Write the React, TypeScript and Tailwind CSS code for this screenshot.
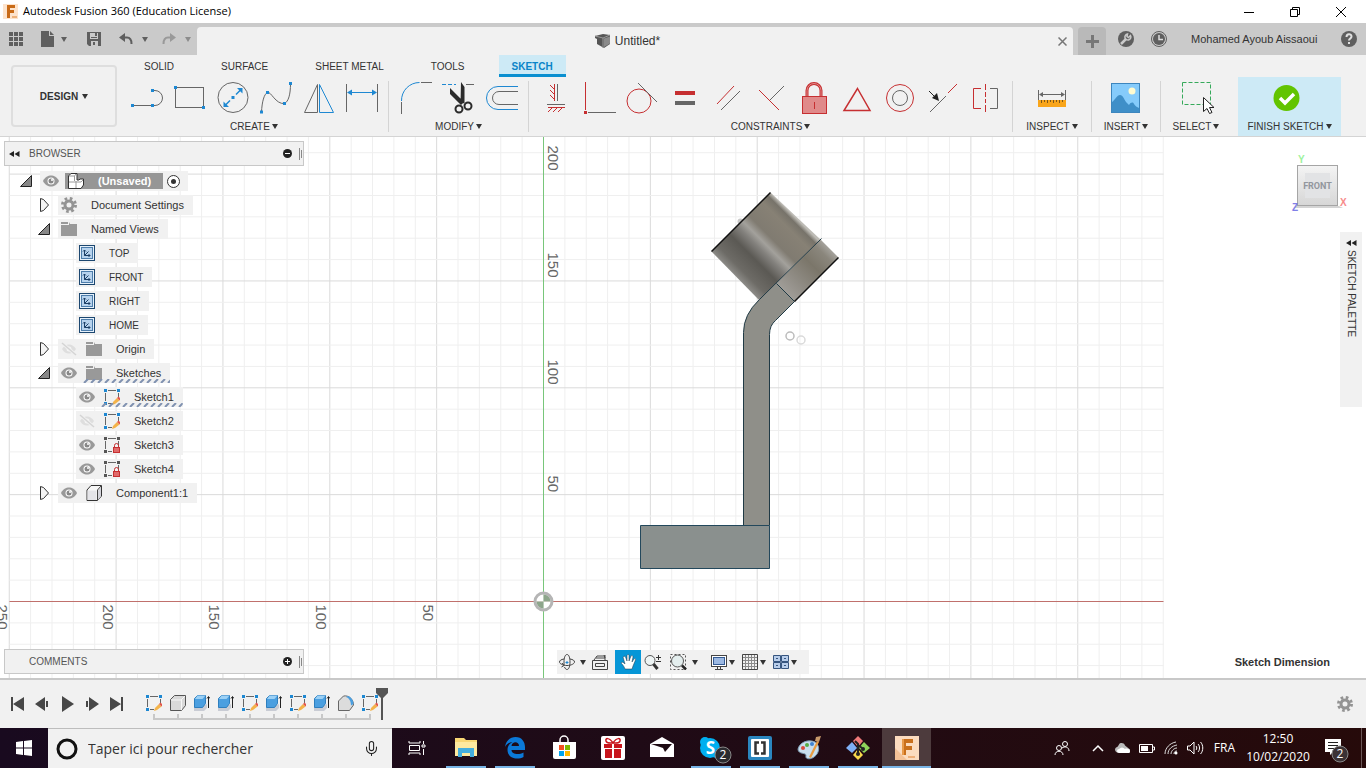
import type { ReactNode } from "react";
import { LuMic } from "react-icons/lu";

const GRAY = "#666666";
const RED = "#c62f31";
const BLUE = "#1e88d2";

function Svg({ w = 16, h = 16, children }: { w?: number; h?: number; children: ReactNode }) {
  return (
    <svg width={w} height={h} viewBox={`0 0 ${w} ${h}`} fill="none" className="shrink-0">
      {children}
    </svg>
  );
}

function Caret({ color = "#333333" }: { color?: string }) {
  return (
    <Svg w={6} h={5}>
      <path d="M0 0h6L3 5z" fill={color} />
    </Svg>
  );
}

function Dots({ points }: { points: [number, number][] }) {
  return (
    <>
      {points.map(([x, y]) => (
        <rect key={`${x}-${y}`} x={x - 1.5} y={y - 1.5} width="3" height="3" fill={BLUE} />
      ))}
    </>
  );
}

/* ---------- ribbon icons ---------- */

const createTools: [string, ReactNode][] = [
  ["Line", <><path d="M2 23.5h20M23 8.5h1a7.5 7.5 0 0 1 0 15h-2" stroke={GRAY} /><Dots points={[[1.5, 23.5], [21.5, 23.5], [21.5, 8.5]]} /></>],
  ["Rectangle", <><rect x="1.5" y="5.5" width="28" height="20" stroke={GRAY} /><Dots points={[[1.5, 5.5], [29.5, 25.5]]} /></>],
  ["Circle", <><circle cx="16" cy="15.5" r="15" stroke={GRAY} /><path d="M8 23.5l5-5M19 12.5l5-5" stroke={BLUE} strokeWidth="1.5" /><path d="M6.5 25v-5.5L12 25zM25.5 6v5.5L20 6z" fill={BLUE} /><Dots points={[[16, 15.5]]} /></>],
  ["Spline", <><path d="M1.5 30C2 20 4 12 7.500 10.500s8 12 17 11c4-2 6-9 6-20" stroke={GRAY} /><Dots points={[[1.5, 30], [7.5, 10.5], [24.5, 21.5], [30.5, 1.5]]} /></>],
  ["Mirror", <><path d="M14.5 2.500v28h-13z" stroke={GRAY} /><path d="M16.5 2.500v28h14z" stroke={BLUE} /></>],
  ["Dimension", <><path d="M.5 2v28M31.5 2v28" stroke={GRAY} /><path d="M2 10.5h28" stroke={BLUE} /><path d="M1 10.5l5-3v6zM31 10.5l-5-3v6z" fill={BLUE} /></>],
];

const modifyTools: [string, ReactNode][] = [
  ["Fillet", <><path d="M1.5 19A18 18 0 0 1 19.5 .5" stroke={BLUE} /><path d="M21 .5h11M1.5 20v12" stroke={GRAY} /></>],
  ["Trim", <><path d="M-1 2.5h14" stroke={BLUE} strokeDasharray="4 2" /><path d="M23 2.5h8" stroke={GRAY} /><path d="M7 6l14 14-3 3L7 12zM18 0l3.500 5v16l-4 1z" fill="#2b2b2b" /><circle cx="16" cy="27" r="3.5" stroke="#2b2b2b" strokeWidth="2" /><circle cx="25" cy="24" r="3.5" stroke="#2b2b2b" strokeWidth="2" /></>],
  ["Offset", <><path d="M32 4.500H12a11.500 11.500 0 0 0 0 23h20" stroke={BLUE} /><path d="M32 9.500H13a6.500 6.500 0 0 0 0 13h19" stroke={GRAY} /></>],
];

const constraintTools: [string, ReactNode][] = [
  ["Horizontal/Vertical", <><path d="M14.5 2v17M8 25.5h17M10 3l4 4M10 8l4 4M10 13l4 4M12 26l-4 4M17 26l-4 4M22 26l-4 4" stroke={RED} /><path d="M17.5 2v17M7 22.5h18" stroke={GRAY} /></>],
  ["Coincident", <><path d="M2.5 0v28" stroke={RED} /><rect x="1" y="29" width="3" height="3" fill={RED} /><path d="M5 30.5h28" stroke={GRAY} /></>],
  ["Tangent", <><circle cx="13" cy="19" r="12" stroke={RED} /><path d="M12 1l19 19" stroke={GRAY} /></>],
  ["Equal", <><path d="M6 11h20" stroke={RED} strokeWidth="4" /><path d="M6 21h20" stroke={GRAY} strokeWidth="4" /></>],
  ["Parallel", <><path d="M5 22L22 4" stroke={RED} /><path d="M9 28L28 9" stroke={GRAY} /></>],
  ["Perpendicular", <><path d="M4 8l20 20" stroke={RED} /><path d="M15 18L29 4" stroke={GRAY} /></>],
  ["Fix", <><path d="M9 15V8.5a7 7 0 0 1 14 0V15" stroke={RED} strokeWidth="3" /><path d="M9 15V8.5a7 7 0 0 1 14 0V15" stroke="#e08a8a" /><rect x="4.5" y="14.5" width="24" height="17" fill="#e08a8a" stroke={RED} /><path d="M16.5 20v7" stroke={RED} /></>],
  ["Midpoint", <path d="M16.5 6.5l12.500 22H3z" stroke={RED} strokeWidth="1.5" />],
  ["Concentric", <><circle cx="16" cy="16" r="13.5" stroke={RED} /><circle cx="16" cy="16" r="7.5" stroke={GRAY} /></>],
  ["Collinear", <><path d="M3 30l16-16" stroke={GRAY} /><path d="M21 11L30 2" stroke={RED} /><path d="M2 9l6 6" stroke="#222" /><path d="M12 19l-2-8-5 5z" fill="#222" /></>],
  ["Symmetry", <><path d="M11 6.5H3.500v20H11M15.500 2v6M15.500 10v5M15.500 17v4M15.500 23v7" stroke={RED} /><path d="M20 6.5h7.500v20H20" stroke={GRAY} /></>],
];

const inspectIcon = (
  <>
    <path d="M2.5 8v10M29.5 8v10M4 12.5h24" stroke={GRAY} />
    <path d="M3 12.5l4-2.500v5zM29 12.5l-4-2.500v5z" fill={GRAY} />
    <rect x="2" y="18" width="28" height="7" fill="#f9a51a" />
    <path d="M5.5 18v3M8.5 18v2M11.5 18v3M14.5 18v2M17.5 18v3M20.5 18v2M23.5 18v3M26.5 18v2" stroke="#7a5518" />
  </>
);

const insertIcon = (
  <>
    <rect x="1.5" y="1.5" width="28" height="29" fill="#85cbfb" stroke="#3d86be" />
    <circle cx="22" cy="9" r="3.5" fill="#fffbd0" />
    <path d="M2 20c3-2 5-7 8-7s4 4 6 7l3 3c2-3 4-3 5-1s3 3 5 4v4H2z" fill="#3f8fc8" />
  </>
);

const selectIcon = (
  <>
    <rect x="2.5" y=".5" width="28" height="22" stroke="#36a95a" strokeDasharray="4 2" />
    <path d="M23.5 15.500v14l3.500-3 2.500 5 2.500-1-2.500-5h4.500z" fill="#fff" stroke="#222" />
  </>
);

const finishIcon = (
  <>
    <circle cx="12.5" cy="16" r="13" fill="#62c400" />
    <path d="M6 16l5 5 9-9" stroke="#fff" strokeWidth="3.5" />
  </>
);

function ToolGroup({ label, tools }: { label: string; tools: [string, ReactNode][] }) {
  return (
    <div className="flex flex-col px-[5px] pt-1">
      <div className="flex">
        {tools.map(([name, icon]) => (
          <button key={name} aria-label={name} className="flex h-[34px] w-[43px] items-center justify-center">
            <svg width="32" height="32" viewBox="0 0 32 32" fill="none" className="overflow-visible">
              {icon}
            </svg>
          </button>
        ))}
      </div>
      <GroupLabel label={label} />
    </div>
  );
}

function GroupLabel({ label }: { label: string }) {
  return (
    <button className="mt-[3px] flex h-4 items-center justify-center gap-0.5 text-[10px] whitespace-nowrap">
      {label}
      <Caret />
    </button>
  );
}

function SingleGroup({ label, icon, className }: { label: string; icon: ReactNode; className: string }) {
  return (
    <div className={`flex flex-col items-center pt-1 ${className}`}>
      <button aria-label={`${label} tool`} className="flex h-[34px] items-center">
        <svg width="32" height="32" viewBox="0 0 32 32" fill="none" className="overflow-visible">
          {icon}
        </svg>
      </button>
      <GroupLabel label={label} />
    </div>
  );
}

function Separator() {
  return <div className="h-[51px] w-px shrink-0 self-center bg-[#d4d4d4]" />;
}

/* ---------- browser tree ---------- */

function Eye() {
  return (
    <Svg>
      <path d="M0 8c2-4 5-5.500 8-5.500S14 4 16 8c-2 4-5 5.500-8 5.500S2 12 0 8z" fill="#999" />
      <circle cx="8" cy="8" r="3.5" fill="#fff" />
      <circle cx="8" cy="8" r="2.5" fill="#888" />
      <circle cx="9" cy="7" r="1" fill="#fff" />
    </Svg>
  );
}

function EyeOff() {
  return (
    <Svg>
      <path d="M1 8c2-3 4-4.500 7-4.500S13 5 15 8c-2 3-4 4.500-7 4.500S3 11 1 8z" fill="#dedede" />
      <circle cx="8" cy="8" r="2.5" fill="#f4f4f4" />
      <path d="M1 2l14 12" stroke="#f1f1f1" strokeWidth="3" />
      <path d="M1 2l14 12" stroke="#d4d4d4" strokeWidth="1.5" />
    </Svg>
  );
}

function Folder() {
  return (
    <Svg>
      <path d="M0 1h7v2H0zM8 1l1 2h7v12H0V4h8z" fill="#999" />
    </Svg>
  );
}

function Gear() {
  return (
    <Svg>
      <circle cx="8" cy="8" r="4" stroke="#949494" strokeWidth="3" />
      <circle cx="8" cy="8" r="6.5" stroke="#949494" strokeWidth="3" strokeDasharray="2.6 2.505" />
    </Svg>
  );
}

function ViewIcon() {
  return (
    <Svg>
      <rect x=".5" y=".5" width="15" height="15" fill="#e6f1fb" stroke="#1c4770" />
      <rect x="2.5" y="2.5" width="11" height="11" fill="#b7d3ee" stroke="#4d7dab" />
      <path d="M5.5 5v5.500H11M5.500 10.500L9.500 6.500M4 6.500L5.500 5 7 6.500M9.500 9l1.500 1.500L9.500 12" stroke="#1c3f66" />
    </Svg>
  );
}

function SketchIcon({ locked = false }: { locked?: boolean }) {
  const dot = locked ? "#555" : BLUE;
  return (
    <Svg>
      <path d="M4 1.5h8M1.500 4v8M14.500 4v5M4 14.500h4" stroke="#666" />
      <path d="M0 0h3v3H0zM13 0h3v3h-3zM0 13h3v3H0z" fill={dot} />
      {locked ? (
        <>
          <path d="M10.5 10V8.500a2 2 0 0 1 4 0V10" stroke={RED} />
          <rect x="9.5" y="10.5" width="6" height="5" fill="#e06a6a" stroke={RED} />
        </>
      ) : (
        <>
          <path d="M9 13l4-4 2.500 2.500-4.500 3.500-3 1z" fill="#f4b34a" />
          <path d="M13 9l1.500-1.500L17 10l-1.500 1.500z" fill="#e2574c" />
        </>
      )}
    </Svg>
  );
}

function BoxIcon() {
  return (
    <Svg>
      <path d="M1 5l4-4.500h10.500V11l-4 4.500H1z" fill="#f7f7f7" stroke="#333" />
      <path d="M12 5.500V15l3-4V2z" fill="#d5d5dc" />
      <path d="M1.500 5.500h9v9.500h-9z" fill="#e4e4e8" />
      <path d="M11.500 5v10M15 1l-3.500 4" stroke="#444" />
    </Svg>
  );
}

function AssemblyIcon() {
  return (
    <Svg>
      <path d="M.5 3L3 .5h6V7h2l1-1h3.500v6L13 15.500H.5z" fill="#fff" stroke="#333" />
      <path d="M1 9h7M8 8v7M6.500 3v5M1 3h5.500L8 1M8 9h5l2-2" stroke="#9a9a9a" />
    </Svg>
  );
}

function Expander({ open }: { open?: boolean }) {
  return open ? (
    <Svg w={12} h={12}>
      <path d="M11.5 .5v11H.5z" fill="#888" stroke="#222" />
    </Svg>
  ) : (
    <Svg w={12} h={14}>
      <path d="M2.5 .5v13l3-1 5-5.500-5-5.500z" fill="#f4f4f4" stroke="#333" />
    </Svg>
  );
}

type TreeRow = {
  label: string;
  level: 1 | 2;
  icon: ReactNode;
  eye?: "on" | "off";
  open?: boolean;
  hatched?: boolean;
};

const treeRows: TreeRow[] = [
  { label: "Document Settings", level: 1, icon: <Gear />, open: false },
  { label: "Named Views", level: 1, icon: <Folder />, open: true },
  { label: "TOP", level: 2, icon: <ViewIcon /> },
  { label: "FRONT", level: 2, icon: <ViewIcon /> },
  { label: "RIGHT", level: 2, icon: <ViewIcon /> },
  { label: "HOME", level: 2, icon: <ViewIcon /> },
  { label: "Origin", level: 1, icon: <Folder />, eye: "off", open: false },
  { label: "Sketches", level: 1, icon: <Folder />, eye: "on", open: true, hatched: true },
  { label: "Sketch1", level: 2, icon: <SketchIcon />, eye: "on", hatched: true },
  { label: "Sketch2", level: 2, icon: <SketchIcon />, eye: "off" },
  { label: "Sketch3", level: 2, icon: <SketchIcon locked />, eye: "on" },
  { label: "Sketch4", level: 2, icon: <SketchIcon locked />, eye: "on" },
  { label: "Component1:1", level: 1, icon: <BoxIcon />, eye: "on", open: false },
];

function TreeItem({ row }: { row: TreeRow }) {
  const isView = row.level === 2 && !row.eye;
  return (
    <li className={`flex h-6 items-center ${row.level === 1 ? "pl-[38px]" : "pl-[76px]"}`}>
      {row.open !== undefined && (
        <button aria-label={`Toggle ${row.label}`} className="mr-2 flex w-3 justify-center">
          <Expander open={row.open} />
        </button>
      )}
      <div className="relative flex h-5 items-center bg-[#f1f1f1] pr-[9px] pl-[3px]">
        {row.eye && (
          <button aria-label={`Visibility of ${row.label}`} className="mr-[9px]">
            {row.eye === "on" ? <Eye /> : <EyeOff />}
          </button>
        )}
        {row.icon}
        <span className={`ml-[14px] ${isView ? "text-[10px]" : ""}`}>{row.label}</span>
        {row.hatched && (
          <svg className="absolute right-0 bottom-0 left-[25px] h-1 w-[calc(100%-25px)]">
            <defs>
              <pattern id="hatch" width="7" height="4" patternUnits="userSpaceOnUse">
                <path d="M1 4l4-4" stroke="#8091b0" strokeWidth="2" />
              </pattern>
            </defs>
            <rect width="100%" height="4" fill="url(#hatch)" />
          </svg>
        )}
      </div>
    </li>
  );
}

function Grip() {
  return (
    <Svg w={3} h={12}>
      <path d="M.5 0v12M2.5 2v8" stroke="#888" />
    </Svg>
  );
}

function Browser() {
  return (
    <aside className="flex w-[304px] flex-col pt-1 pl-1 text-[11px] text-[#333]">
      <div className="flex h-[25px] shrink-0 items-center border border-[#c8c8c8] bg-[#f1f1f1] pr-px pl-1 text-[10px] text-[#555]">
        <button aria-label="Collapse browser">
          <Svg w={11} h={6}>
            <path d="M5 0v6L0 3zM10.5 0v6l-5-3z" fill="#222" />
          </Svg>
        </button>
        <h2 className="ml-[9px] flex-1">BROWSER</h2>
        <button aria-label="Hide browser" className="mr-[7px]">
          <Svg w={9} h={9}>
            <circle cx="4.5" cy="4.5" r="4.5" fill="#222" />
            <path d="M2 4.5h5" stroke="#fff" />
          </Svg>
        </button>
        <Grip />
      </div>
      <ul className="-ml-1 pt-[3px]">
        <li className="flex h-6 items-center pl-5">
          <button aria-label="Toggle document" className="mr-2">
            <Expander open />
          </button>
          <div className="flex h-5 items-center bg-[#f1f1f1] pr-2 pl-[3px]">
            <button aria-label="Visibility of document" className="mr-[6px]">
              <Eye />
            </button>
            <div className="flex h-4 items-center bg-[#969696] pr-3 pl-[3px] font-bold text-white">
              <AssemblyIcon />
              <span className="ml-[14px]">(Unsaved)</span>
            </div>
            <button aria-label="Activate component" className="ml-1">
              <Svg w={13} h={13}>
                <circle cx="6.5" cy="6.5" r="6" fill="#fff" stroke="#333" />
                <circle cx="6.5" cy="6.5" r="2.5" fill="#333" />
              </Svg>
            </button>
          </div>
        </li>
        {treeRows.map((row) => (
          <TreeItem key={row.label} row={row} />
        ))}
      </ul>
      <div className="mt-auto mb-1 flex h-[25px] shrink-0 items-center border border-[#c8c8c8] bg-[#f1f1f1] pr-px pl-6 text-[10px] text-[#555]">
        <h2 className="flex-1">COMMENTS</h2>
        <button aria-label="Show comments" className="mr-[7px]">
          <Svg w={9} h={9}>
            <circle cx="4.5" cy="4.5" r="4.5" fill="#222" />
            <path d="M2 4.5h5M4.500 2v5" stroke="#fff" />
          </Svg>
        </button>
        <Grip />
      </div>
    </aside>
  );
}

/* ---------- modelling canvas ---------- */

const STEP = 21.37;

// Everything is drawn in pixels from the sketch origin.
function Scene() {
  const columns = Array.from({ length: 55 }, (_, i) => i - 25);
  const rows = Array.from({ length: 26 }, (_, i) => i - 22);

  return (
    <svg className="absolute inset-0 h-full w-full" fill="none">
      <defs>
        <linearGradient id="shade" gradientUnits="userSpaceOnUse" x1="168" y1="-350" x2="227" y2="-409">
          <stop offset="0" stopColor="#8b8a86" />
          <stop offset="0.1" stopColor="#6d6b66" />
          <stop offset="0.3" stopColor="#5b5954" />
          <stop offset="0.44" stopColor="#84827e" />
          <stop offset="0.52" stopColor="#a3a19c" />
          <stop offset="0.62" stopColor="#807b71" />
          <stop offset="0.85" stopColor="#878175" />
          <stop offset="0.95" stopColor="#77736a" />
          <stop offset="1" stopColor="#bdbbb5" />
        </linearGradient>
        <linearGradient id="ringShade" gradientUnits="userSpaceOnUse" x1="242" y1="-309" x2="287" y2="-354">
          <stop offset="0" stopColor="#a09d98" />
          <stop offset="0.3" stopColor="#8d8981" />
          <stop offset="0.6" stopColor="#7b766a" />
          <stop offset="0.85" stopColor="#8a867c" />
          <stop offset="1" stopColor="#aaa8a2" />
        </linearGradient>
      </defs>
      <g transform="translate(543.5 464.5)">
        {columns.filter((i) => i !== 0 && i <= 29).map((i) => (
          <line key={i} x1={i * STEP} x2={i * STEP} y1="-465" y2="77" stroke={i % 5 === 0 ? "#dadada" : "#efefef"} />
        ))}
        {rows.filter((i) => i !== 0).map((i) => (
          <line key={i} x1="-534" x2="620" y1={i * STEP} y2={i * STEP} stroke={i % 5 === 0 ? "#dadada" : "#efefef"} />
        ))}
        <line x1="-534" x2="620" y1="0" y2="0" stroke="#c0706c" />
        <line x1="0" x2="0" y1="-465" y2="77" stroke="#78c67a" />
        <circle r="8.5" fill="#fff" fillOpacity=".8" stroke="#b5b5b5" strokeWidth="3" />
        <path d="M0-7A7 7 0 0 1 7 0H0zM0 7A7 7 0 0 1-7 0H0z" fill="#8da58b" />

        <circle cx="197" cy="-380" r="3" fill="#c9c9c9" />
        <path d="M227-409L168-350 216-301 277-362z" fill="url(#shade)" />
        <path d="M232-317L277-362 295-344 251-300z" fill="url(#ringShade)" />
        <path d="M200-76V-269q0-18 16-33l17-16 18 18-19 19q-6 5-6 14V-76z" fill="#8f8f89" />
        <path d="M200-76V-269q0-18 16-33L278-363M226-76V-267q0-9 6-14l19-19M233-318l18 18" stroke="#203a45" />
        <path d="M168-350l59-59M251-300l44-44" stroke="#111" strokeWidth="1.5" />
        <path d="M97-76H226v43H97z" fill="#8a908e" stroke="#23485c" />
        <circle cx="246.500" cy="-265.500" r="4" stroke="#bcbcbc" strokeWidth="1.5" />
        <circle cx="257.500" cy="-261.500" r="4" stroke="#dadada" strokeWidth="1.5" />

        <g fill="#666" fontSize="15">
          <text transform="translate(4 -456) rotate(90)">200</text>
          <text transform="translate(4 -349) rotate(90)">150</text>
          <text transform="translate(4 -242) rotate(90)">100</text>
          <text transform="translate(4 -126) rotate(90)">50</text>
          <text transform="translate(-547 3) rotate(90)">250</text>
          <text transform="translate(-441 3) rotate(90)">200</text>
          <text transform="translate(-335 3) rotate(90)">150</text>
          <text transform="translate(-228 3) rotate(90)">100</text>
          <text transform="translate(-121 3) rotate(90)">50</text>
        </g>
      </g>
    </svg>
  );
}

function NavBar() {
  return (
    <nav className="absolute bottom-1 left-1/2 flex h-6 w-[252px] -translate-x-1/2 items-center bg-[#f1f1f1] pl-0.5">
      <button aria-label="Orbit" className="flex w-[32px] items-center gap-1">
        <Svg w={17}>
          <path d="M5 5C2 5.500 .5 6.500 .5 8s3 3.500 7.500 3.500 7.500-2 7.500-3.500S14 5.500 11 5M5 11V8c0-4 1-7.500 3-7.500s3 3.500 3 7.500-1 7.500-3 7.500c-1 0-2-1-2.500-2.500M3 9l2 2.500L2.500 13" stroke="#444" />
          <path d="M6.500 8.500h3M8 7v3" stroke={BLUE} />
        </Svg>
        <Caret />
      </button>
      <button aria-label="Look at" className="ml-px w-[23px]">
        <Svg>
          <path d="M.5 6.500h15v9H.5zM3.500 9.500h9v3h-9zM2 6l3-4h8M4 4h9l-1-3M13 1v5" stroke="#444" />
        </Svg>
      </button>
      <button aria-label="Pan" aria-pressed="true" className="flex h-6 w-[26px] items-center justify-center bg-[#0696d7]">
        <Svg>
          <path d="M5 15c-1-3-3-5-4-6 1-2 3 0 4 1L3 3c1-1 2-1 2.500 0L7 7V1.500c1-1.500 2-1 2 0V7l2-5c1-1 2 0 2 1l-1 5 2-3c1-1 2 0 1.500 1L13 12l-1 3z" fill="#fff" stroke="#234" strokeWidth=".5" />
        </Svg>
      </button>
      <button aria-label="Zoom" className="ml-[3px] w-[26px]">
        <Svg w={17}>
          <circle cx="6" cy="6.500" r="5" fill="#eef4f4" stroke="#555" />
          <path d="M9.5 10l4 5" stroke="#333" strokeWidth="3" />
          <path d="M12 3.500h5M14.500 1v5M12 7.500h5" stroke="#333" />
        </Svg>
      </button>
      <button aria-label="Fit" className="flex w-[41px] items-center gap-[5px]">
        <Svg w={17}>
          <rect x=".5" y=".5" width="15" height="15" stroke="#555" strokeDasharray="2 2" />
          <circle cx="7.5" cy="7" r="6" fill="#e4eeee" stroke="#555" />
          <path d="M12 11.500l4 4" stroke="#222" strokeWidth="2.5" />
        </Svg>
        <Caret />
      </button>
      <button aria-label="Display settings" className="flex w-[31px] items-center gap-0.5">
        <Svg>
          <rect x=".5" y="1.5" width="15" height="11" fill="#fff" stroke="#444" />
          <rect x="2.5" y="3.5" width="11" height="7" fill="#9cb9e3" stroke="#345b94" />
          <path d="M4 15.500h8M6.500 13v2M9.500 13v2" stroke="#444" />
        </Svg>
        <Caret />
      </button>
      <button aria-label="Grid settings" className="flex w-[31px] items-center gap-0.5">
        <Svg>
          <path d="M3.5 0v16M6.500 0v16M9.500 0v16M12.500 0v16M0 3.500h16M0 6.500h16M0 9.500h16M0 12.500h16" stroke="#8a8a8a" />
          <path d="M.5 .5h15v15H.5z" stroke="#444" />
        </Svg>
        <Caret />
      </button>
      <button aria-label="Viewports" className="flex items-center gap-0.5">
        <Svg>
          <path d="M.5 1.500h7v6h-7zM8.500 1.500h7v6h-7zM.5 8.500h7v6h-7zM8.500 8.500h7v6h-7z" fill="#b8cdea" stroke="#36557f" />
          <path d="M3 4.500h2M11 4.500h2M3 11.500h2M11 11.500h2" stroke="#36557f" />
        </Svg>
        <Caret />
      </button>
    </nav>
  );
}

function ViewCube() {
  return (
    <svg width="60" height="64" viewBox="0 0 60 64" fill="none" className="shrink-0 text-[10px]">
      <defs>
        <linearGradient id="cube" x1="0" y1="0" x2="0" y2="1">
          <stop offset="0" stopColor="#f4f4f4" />
          <stop offset="1" stopColor="#d6d6d6" />
        </linearGradient>
      </defs>
      <path d="M6 55h43l4 2H4z" fill="#d4d4d4" />
      <text x="8" y="12" fill="#9df29d" fontWeight="bold">Y</text>
      <text x="50" y="55" fill="#f78b8b" fontWeight="bold">X</text>
      <rect x="7.5" y="14.5" width="40" height="40" fill="url(#cube)" stroke="#a5a5a5" />
      <rect x="15" y="22" width="25" height="25" fill="#e2e3e5" />
      <text x="2" y="60" fill="#8080e8" fontWeight="bold">Z</text>
      <text x="27.5" y="38" textAnchor="middle" fill="#92969d" fontWeight="bold" fontFamily="Roboto, sans-serif" fontSize="9">
        FRONT
      </text>
    </svg>
  );
}

/* ---------- timeline ---------- */

function ExtrudeIcon() {
  return (
    <Svg>
      <path d="M0 12l2-2h9l2-1v4l-3 3H0z" fill="#c9ccd4" />
      <path d="M.5 3.500l3-3h8v8l-3 4h-8z" fill="#4b9fe0" stroke="#2f7fbe" />
      <path d="M1 4h7.500l3-3.500h-8z" fill="#9bd0f5" />
      <path d="M14.500 2v11M13 3.500l1.500-2L16 3.500" stroke="#222" />
    </Svg>
  );
}

function SolidIcon({ fillet = false }: { fillet?: boolean }) {
  return (
    <Svg>
      {fillet ? (
        <>
          <path d="M.5 6l5-5c6-1 10 4 10 9l-4 5.500H.5z" fill="#dcdcdc" stroke="#666" />
          <path d="M8 2l2-1c3 1 5.500 4 5.500 8L13 10.500C13 6 11 3 8 2z" fill="#4b9fe0" />
        </>
      ) : (
        <>
          <path d="M.5 4.500l4-4h11v10l-4 5H.5z" fill="#d9d9d9" stroke="#555" />
          <path d="M1 5h10l4-4M11.500 5v10" stroke="#f7f7f7" />
        </>
      )}
    </Svg>
  );
}

const features: [string, ReactNode][] = [
  ["Sketch1", <SketchIcon />],
  ["Body", <SolidIcon />],
  ["Extrude1", <ExtrudeIcon />],
  ["Extrude2", <ExtrudeIcon />],
  ["Sketch2", <SketchIcon />],
  ["Extrude3", <ExtrudeIcon />],
  ["Sketch3", <SketchIcon />],
  ["Extrude4", <ExtrudeIcon />],
  ["Fillet1", <SolidIcon fillet />],
  ["Sketch4", <SketchIcon />],
];

const playback: [string, string][] = [
  ["First", "M2 1h2v14H2zM15 1v14L4 8z"],
  ["Previous", "M11 1v14L1 8zM12 5h2v6h-2z"],
  ["Play", "M3 0v16l12-8z"],
  ["Next", "M5 1v14l10-7zM2 5h2v6H2z"],
  ["Last", "M12 1h2v14h-2zM1 1v14l11-7z"],
];

function Timeline() {
  return (
    <section className="flex h-[50px] shrink-0 items-center border-t-2 border-[#c8c8c8] bg-[#f1f1f1] pl-1">
      <div className="flex">
        {playback.map(([name, d]) => (
          <button key={name} aria-label={name} className="flex w-[25px] justify-center">
            <Svg>
              <path d={d} fill="#474747" />
            </Svg>
          </button>
        ))}
      </div>
      <div className="ml-[13px] flex">
        {features.map(([name, icon], i) => (
          <button key={name} aria-label={name} className="flex w-6 flex-col items-center pt-[6px]">
            {icon}
            <span className="mt-[3px] flex h-[6px] w-full">
              <span className={`h-[6px] w-[13px] border-r-2 border-[#c8c8c8] ${i > 0 ? "border-b-2" : ""}`} />
              <span className={`h-[6px] w-[11px] border-[#c8c8c8] ${i < 9 ? "border-b-2" : ""}`} />
            </span>
          </button>
        ))}
      </div>
      <svg width="12" height="32" viewBox="0 0 12 32" className="-ml-[6px]" fill="#555">
        <path d="M0 0h12v5L7 10v22H5V10L0 5z" />
      </svg>
      <button aria-label="Timeline settings" className="mr-[13px] ml-auto">
        <Gear />
      </button>
    </section>
  );
}

/* ---------- windows taskbar ---------- */

const taskApps: { name: string; running?: boolean; active?: boolean; icon: ReactNode }[] = [
  {
    name: "Task view",
    icon: <path d="M4 5v2h11V5M4 19v-2h11v2M4.500 9.500h10v5h-10zM18.500 5v3M18.500 13v6M17 9h3v2h-3z" stroke="#fff" />,
  },
  {
    name: "File Explorer",
    running: true,
    icon: (
      <>
        <path d="M1 2h9l2 2h11v16H1z" fill="#f8d775" />
        <path d="M1 6h22v14H1z" fill="#fde9a0" />
        <path d="M4 12h16v9h-4v-4H8v4H4z" fill="#44aede" />
      </>
    ),
  },
  {
    name: "Edge",
    running: true,
    icon: (
      <path
        d="M2 11C3 4 8 1 12.500 1 19 1 22 6 22 11v3H8.500c0 4 7 5.500 12 2.500v4.500C14 24.500 4.500 22 4.500 14c0-4 2-6.500 5-8C6 6.500 3.500 8 2 11zM8.500 10H16c0-5-7-5-7.500 0z"
        fill="#0b79d8"
      />
    ),
  },
  {
    name: "Store",
    icon: (
      <>
        <path d="M8 7V4a4 4 0 0 1 8 0v3" stroke="#fff" strokeWidth="1.5" />
        <path d="M1 6h23v15q0 2-2 2H3q-2 0-2-2z" fill="#fff" />
        <path d="M7 9h5v5H7z" fill="#f25022" />
        <path d="M13 9h5v5h-5z" fill="#7fba00" />
        <path d="M7 15h5v5H7z" fill="#00a4ef" />
        <path d="M13 15h5v5h-5z" fill="#ffb900" />
      </>
    ),
  },
  {
    name: "Gifts",
    icon: (
      <>
        <rect width="24" height="24" rx="2" fill="#fff" />
        <path d="M3 8h8v4H3zM13 8h8v4h-8zM4 13h7v9H4zM13 13h7v9h-7z" fill="#c8161d" />
        <path d="M12 7C8 1 4 2 5 5s5 2 7 2 6 1 7-2-3-4-7 2z" stroke="#c8161d" strokeWidth="1.5" />
      </>
    ),
  },
  {
    name: "Mail",
    icon: (
      <>
        <path d="M0 8l12-7 12 7v13H0z" fill="#fff" />
        <path d="M1 8h21l-7 8-2-4z" fill="#1d0a12" />
      </>
    ),
  },
  {
    name: "Skype",
    running: true,
    icon: (
      <>
        <circle cx="11" cy="12" r="10" fill="#00aff0" />
        <circle cx="6" cy="6" r="5" fill="#00aff0" />
        <circle cx="17" cy="17" r="5" fill="#00aff0" />
        <text x="11.5" y="18" textAnchor="middle" fontSize="17" fontWeight="bold" fill="#fff">S</text>
        <circle cx="24" cy="19" r="8" fill="#2b2b2f" stroke="#888" />
        <text x="24" y="23" textAnchor="middle" fontSize="12" fill="#fff">2</text>
      </>
    ),
  },
  {
    name: "Brackets",
    running: true,
    icon: (
      <>
        <rect width="24" height="24" rx="2" fill="#2a86bf" />
        <rect x="3" y="3" width="18" height="18" rx="1" fill="#fff" />
        <path d="M11 6.500H7.500v11H11M13 6.500h3.500v11H13" stroke="#333" strokeWidth="2.5" />
      </>
    ),
  },
  {
    name: "Paint",
    running: true,
    icon: (
      <>
        <path d="M1 13C3 6 11 3 18 6c5 3 5 11-1 15-4 3-9 2-8-1 1-4-8-1-8-7z" fill="#c9dfee" stroke="#7d9db5" />
        <circle cx="6" cy="12" r="2" fill="#d94b3c" />
        <circle cx="10" cy="9" r="2" fill="#57ad45" />
        <circle cx="15" cy="8" r="2" fill="#3f83d0" />
        <path d="M12 21L20 5l2 1-8 16z" fill="#e89d43" />
        <path d="M18 5l1-4 5-1-2 6z" fill="#c79a6b" />
      </>
    ),
  },
  {
    name: "Git",
    running: true,
    icon: (
      <>
        <path d="M12 0l5 5-5 6-5-6z" fill="#f07a7a" />
        <path d="M6 6l5 6-5 5-6-5z" fill="#7fb0f5" />
        <path d="M18 6l6 6-6 5-5-5z" fill="#8fd45a" />
        <path d="M12 13l5 6-5 5-5-5z" fill="#f7d94c" />
        <path d="M9 5l3 3v11M12 9l4 3" stroke="#222" strokeWidth="2" />
        <circle cx="12" cy="18" r="2" fill="#222" />
        <circle cx="17" cy="13" r="2" fill="#222" />
      </>
    ),
  },
  {
    name: "Fusion 360",
    running: true,
    active: true,
    icon: (
      <>
        <rect width="24" height="24" fill="#fbdcbf" />
        <path d="M0 24V12l12 12z" fill="#f3c297" />
        <path d="M7 3h11v4h-7v3h6v4h-6v5H7z" fill="#c9701c" />
        <path d="M7 3h2v16H7z" fill="#e89a4a" />
        <path d="M13 21h7" stroke="#eeb07a" strokeWidth="2" />
      </>
    ),
  },
];

function Taskbar() {
  return (
    <footer className="flex h-10 shrink-0 items-stretch bg-linear-to-r from-[#190a1f] to-[#260a0a] font-['Open_Sans',sans-serif] text-white">
      <button aria-label="Start" className="flex w-12 items-center justify-center">
        <Svg>
          <path d="M0 2l7-1v6.500H0zM8 1l8-1v7.500H8zM0 8.500h7V15l-7-1zM8 8.500h8V16l-8-1z" fill="#fff" />
        </Svg>
      </button>
      <label className="flex w-[344px] shrink items-center border-t border-[#bdbdbd] bg-[#f1f1f1] pr-3 pl-2">
        <Svg w={22} h={22}>
          <circle cx="11" cy="11" r="9" stroke="#111" strokeWidth="3" />
        </Svg>
        <input
          aria-label="Taper ici pour rechercher"
          placeholder="Taper ici pour rechercher"
          className="ml-[10px] min-w-0 flex-1 bg-transparent text-[14px] text-[#222] outline-none placeholder:text-[#333]"
        />
        <LuMic size={17} color="#222" strokeWidth={1.5} />
      </label>
      <div className="flex">
        {taskApps.map((app) => (
          <button
            key={app.name}
            aria-label={app.name}
            className={`flex w-[49px] flex-col items-center justify-between ${app.active ? "bg-[#4d3b3d]" : ""}`}
          >
            <svg width="24" height="24" viewBox="0 0 24 24" fill="none" className="mt-2 overflow-visible">
              {app.icon}
            </svg>
            {app.running && <span className={`h-0.5 bg-[#78b4e6] ${app.active ? "w-full" : "w-10"}`} />}
          </button>
        ))}
      </div>
      <div className="ml-auto flex items-center text-[12px]">
        <button aria-label="People" className="mr-[21px]">
          <Svg>
            <circle cx="11" cy="4" r="2.5" stroke="#fff" />
            <circle cx="5" cy="8" r="2.5" stroke="#fff" />
            <path d="M1 15c0-5 8-5 8 0M8 8c3-2 7-1 7 3" stroke="#fff" />
          </Svg>
        </button>
        <button aria-label="Hidden icons" className="mr-[9px]">
          <Svg w={14} h={16}>
            <path d="M2 11l5-5 5 5" stroke="#fff" strokeWidth="1.5" />
          </Svg>
        </button>
        <Svg w={17}>
          <path d="M3 12.500a3 3 0 0 1-1-5c1 0 2-1 3-3s5-2 6 1l5 4v3z" fill="#bbb" />
          <path d="M5 13a2 2 0 0 1 0-4c2-2 4-2 6 0 2-1 5 0 5 2s-1 2-2 2z" fill="#fff" />
        </Svg>
        <span className="ml-2">
          <Svg>
            <path d="M.5 4.500h13v8H.5zM14 7h1.500v3H14" stroke="#fff" />
            <path d="M2 6h7v5H2z" fill="#fff" />
          </Svg>
        </span>
        <span className="ml-2">
          <Svg>
            <path d="M2 14C2 8 7 3 13 2M5 14c0-5 4-8 9-9M8 14c0-3 3-6 6-6M11 14c0-2 1-3 3-3" stroke="#ddd" />
            <circle cx="13" cy="13" r="1.5" fill="#fff" />
          </Svg>
        </span>
        <span className="ml-2">
          <Svg w={17}>
            <path d="M.5 6v4H3l4 4V2L3 6zM9 6c1 1 1 3 0 4M11 4c2 2 2 6 0 8M13.500 2c3 3 3 9 0 12" stroke="#fff" />
          </Svg>
        </span>
        <span className="ml-[10px]">FRA</span>
        <time className="ml-[13px] flex w-[60px] flex-col items-center leading-[18px]">
          <span>12:50</span>
          <span>10/02/2020</span>
        </time>
        <button aria-label="Notifications" className="mr-[11px] ml-4">
          <svg width="26" height="24" viewBox="0 0 26 24" fill="none" className="overflow-visible">
            <path d="M1 3h16v13H9l-3 3v-3H1z" fill="#fff" />
            <path d="M4 6.500h10M4 9.500h10M4 12.500h6" stroke="#222" />
            <circle cx="16" cy="18" r="8" fill="#3b3235" stroke="#888" />
            <text x="16" y="22" textAnchor="middle" fontSize="12" fill="#fff">2</text>
          </svg>
        </button>
        <div className="mr-1 h-10 w-px bg-[#6a5656]" />
      </div>
    </footer>
  );
}

/* ---------- page ---------- */

const tabs = ["SOLID", "SURFACE", "SHEET METAL", "TOOLS", "SKETCH"];

export default function App() {
  return (
    <div className="flex min-h-screen flex-col overflow-hidden bg-white font-['Liberation_Sans',Arial,sans-serif] text-[#333]">
      <header className="flex h-[23px] shrink-0 items-center pr-0.5 pl-[3px] font-['Open_Sans',sans-serif] text-[11px] text-black">
        <Svg w={15} h={15}>
          <rect width="15" height="15" fill="#fde3cc" />
          <path d="M4 1h8v3H7v2h4v3H7v5H4z" fill="#c86a17" />
          <path d="M9 13h5" stroke="#edb27c" strokeWidth="2" />
        </Svg>
        <h1 className="ml-[5px]">Autodesk Fusion 360 (Education License)</h1>
        <div className="ml-auto flex">
          <button aria-label="Minimize" className="flex w-[46px] justify-center">
            <Svg w={10} h={10}><path d="M0 5.500h10" stroke="#000" /></Svg>
          </button>
          <button aria-label="Restore" className="flex w-[46px] justify-center">
            <Svg w={10} h={10}><path d="M.5 2.500h7v7h-7zM2.500 2V.5h7v7H8" stroke="#000" /></Svg>
          </button>
          <button aria-label="Close" className="flex w-[46px] justify-center">
            <Svg w={10} h={10}><path d="M0 0l10 10M10 0L0 10" stroke="#000" /></Svg>
          </button>
        </div>
      </header>

      <div className="flex h-8 shrink-0 items-stretch bg-[#cacaca] pt-1">
        <div className="flex w-[197px] shrink-0 items-center pb-1 pl-[9px]">
          <button aria-label="Data panel" className="mr-[18px]">
            <Svg w={14} h={14}>
              <path d="M0 0h4v4H0zM5 0h4v4H5zM10 0h4v4h-4zM0 5h4v4H0zM5 5h4v4H5zM10 5h4v4h-4zM0 10h4v4H0zM5 10h4v4H5zM10 10h4v4h-4z" fill="#5f5f5f" />
            </Svg>
          </button>
          <button aria-label="File" className="mr-5 flex items-center gap-[7px]">
            <Svg w={13} h={16}>
              <path d="M0 0h8v5h5v11H0zM9 0l4 4H9z" fill="#5f5f5f" />
            </Svg>
            <Caret color="#5f5f5f" />
          </button>
          <button aria-label="Save" className="mr-[18px]">
            <Svg w={14} h={14}>
              <path d="M0 0h14v14H2l-2-2z" fill="#5f5f5f" />
              <path d="M3 1h8v6H3zM4 9h7v5H4z" fill="#cacaca" />
              <path d="M8 1h2v3H8zM6 10h2v3H6zM4 5h6v1H4z" fill="#5f5f5f" />
            </Svg>
          </button>
          <button aria-label="Undo" className="mr-[14px] flex items-center gap-[9px]">
            <Svg w={14} h={12}>
              <path d="M3 4.500h5c3 0 4.500 2 4.500 6.500" stroke="#5f5f5f" strokeWidth="2" />
              <path d="M0 4.500L6 0v9z" fill="#5f5f5f" />
            </Svg>
            <Caret color="#5f5f5f" />
          </button>
          <button aria-label="Redo" className="flex items-center gap-[9px]">
            <Svg w={14} h={12}>
              <path d="M11 4.500H6C3 4.500 1.500 6.500 1.500 11" stroke="#999" strokeWidth="2" />
              <path d="M14 4.500L8 0v9z" fill="#999" />
            </Svg>
            <Caret color="#8c8c8c" />
          </button>
        </div>
        <div className="flex flex-1 items-center rounded-t bg-[#f1f1f1] pr-[6px] text-[12px]">
          <div className="flex flex-1 items-center justify-center gap-1">
            <Svg w={16} h={16}>
              <path d="M0 3l8-2 7 1v9l-6 4-7-4V6L0 5z" fill="#555" />
              <path d="M0 3l8 2 7-3M8 5v10" stroke="#999" />
              <path d="M9 5.500l6-2v7L9 14z" fill="#8a8a8a" />
            </Svg>
            <span>Untitled*</span>
          </div>
          <button aria-label="Close tab">
            <Svg w={9} h={9}><path d="M.5 .5l8 8M8.500 .5l-8 8" stroke="#777" strokeWidth="1.5" /></Svg>
          </button>
        </div>
        <div className="flex w-[293px] shrink-0 items-center pl-[5px] text-[11px]">
          <button aria-label="New tab" className="flex h-7 w-7 items-center justify-center rounded-t bg-[#b9b9b9]">
            <Svg w={13} h={13}><path d="M0 6.500h13M6.500 0v13" stroke="#777" strokeWidth="3" /></Svg>
          </button>
          <div className="flex flex-1 items-center pb-1">
            <button aria-label="Extensions" className="ml-3">
              <Svg>
                <circle cx="8" cy="8" r="8" fill="#5f5f5f" />
                <path d="M3 13l5-5" stroke="#cacaca" strokeWidth="2.5" />
                <path d="M12.500 4.500a3 3 0 1 1-3-1.500L9 5.500l1.500 1z" stroke="#cacaca" strokeWidth="1.5" />
              </Svg>
            </button>
            <button aria-label="Job status" className="ml-[17px]">
              <Svg>
                <circle cx="8" cy="8" r="7.5" stroke="#5f5f5f" />
                <circle cx="8" cy="8" r="6" fill="#5f5f5f" />
                <path d="M8 4v4.500h4" stroke="#ddd" strokeWidth="1.5" />
              </Svg>
            </button>
            <button className="ml-6">Mohamed Ayoub Aissaoui</button>
            <button aria-label="Help" className="mr-[9px] ml-auto">
              <Svg>
                <circle cx="8" cy="8" r="8" fill="#5f5f5f" />
                <path d="M5.5 6c0-3.500 5-3.500 5-.5 0 2-2.500 2-2.500 4" stroke="#e0e0e0" strokeWidth="2" />
                <path d="M7 11h2v2H7z" fill="#e0e0e0" />
              </Svg>
            </button>
          </div>
        </div>
      </div>

      <div className="flex h-[82px] shrink-0 border-b border-[#d4d4d4] bg-[#f1f1f1]">
        <button className="mt-[10px] ml-[11px] flex h-[62px] w-[106px] shrink-0 items-center justify-center gap-1 rounded border-2 border-[#dedede] text-[10px] font-bold">
          DESIGN
          <Caret />
        </button>
        <div className="ml-[3px] flex flex-col">
          <div role="tablist" className="flex h-[22px] gap-[21px] pl-[11px] text-[10px]">
            {tabs.map((tab) => (
              <button
                key={tab}
                role="tab"
                aria-selected={tab === "SKETCH"}
                className={`px-[13px] ${tab === "SKETCH" ? "border-b-[3px] border-[#0a8fd0] bg-[#cdeaf6] pt-[3px] font-bold text-[#0a84c8]" : ""}`}
              >
                {tab}
              </button>
            ))}
          </div>
          <div className="flex h-[59px]">
            <ToolGroup label="CREATE" tools={createTools} />
            <Separator />
            <ToolGroup label="MODIFY" tools={modifyTools} />
            <Separator />
            <ToolGroup label="CONSTRAINTS" tools={constraintTools} />
            <Separator />
            <SingleGroup label="INSPECT" icon={inspectIcon} className="w-[78px]" />
            <Separator />
            <SingleGroup label="INSERT" icon={insertIcon} className="w-[68px]" />
            <Separator />
            <SingleGroup label="SELECT" icon={selectIcon} className="w-[70px]" />
            <SingleGroup label="FINISH SKETCH" icon={finishIcon} className="ml-[7px] w-[103px] bg-[#cdeaf6]" />
          </div>
        </div>
      </div>

      <main className="relative flex min-h-[541px] flex-1 justify-between overflow-hidden">
        <Scene />
        <div className="relative flex">
          <Browser />
        </div>
        <NavBar />
        <div className="relative flex flex-col items-end pt-[14px]">
          <div className="mr-4">
            <ViewCube />
          </div>
          <button className="mt-[17px] mr-1 flex h-[175px] w-[22px] flex-col items-center bg-[#f1f1f1] pt-2 text-[10px]">
            <Svg w={11} h={6}>
              <path d="M5 0v6L0 3zM10.5 0v6l-5-3z" fill="#222" />
            </Svg>
            <span className="mt-1 [writing-mode:vertical-rl]">SKETCH PALETTE</span>
          </button>
          <p className="mt-auto mr-9 mb-2 text-[11px] leading-4 font-bold">Sketch Dimension</p>
        </div>
      </main>

      <Timeline />
      <Taskbar />
    </div>
  );
}
